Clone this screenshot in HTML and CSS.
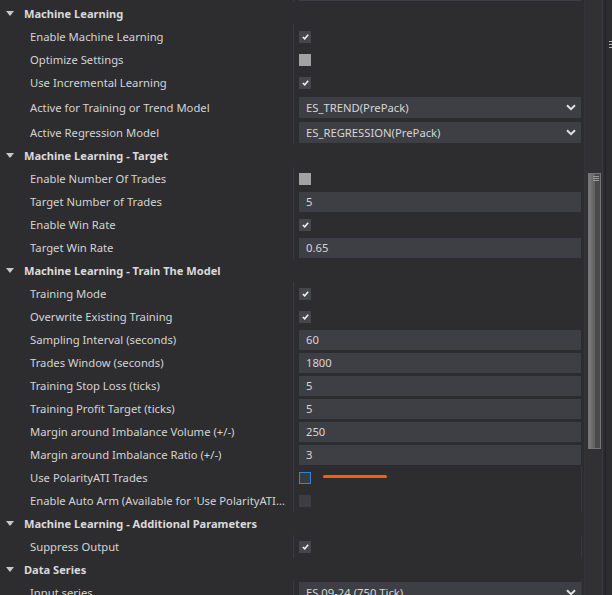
FILE: index.html
```html
<!DOCTYPE html>
<html>
<head>
<meta charset="utf-8">
<link rel="stylesheet" href="styles.css">
</head>
<body>
<div class="panel">
  <div class="row"><div class="label"></div><div class="value"><div class="box"></div></div></div>

  <div class="row header"><span class="tri"></span><span>Machine Learning</span></div>
  <div class="row"><div class="label">Enable Machine Learning</div><div class="value"><div class="cb"><svg width="7" height="6" viewBox="0 0 7 6"><path d="M0.8 3 L2.7 4.8 L6.2 0.8" fill="none" stroke="#f0f0f0" stroke-width="1.6"/></svg></div></div></div>
  <div class="row"><div class="label">Optimize Settings</div><div class="value"><div class="cb off"></div></div></div>
  <div class="row"><div class="label">Use Incremental Learning</div><div class="value"><div class="cb"><svg width="7" height="6" viewBox="0 0 7 6"><path d="M0.8 3 L2.7 4.8 L6.2 0.8" fill="none" stroke="#f0f0f0" stroke-width="1.6"/></svg></div></div></div>
  <div class="row combo1"><div class="label">Active for Training or Trend Model</div><div class="value"><div class="box combo"><span>ES_TREND(PrePack)</span><svg width="10" height="7" viewBox="0 0 10 7"><path d="M1 1.2 L5 5.2 L9 1.2" fill="none" stroke="#e0e0e0" stroke-width="2"/></svg></div></div></div>
  <div class="row combo2"><div class="label">Active Regression Model</div><div class="value"><div class="box combo"><span>ES_REGRESSION(PrePack)</span><svg width="10" height="7" viewBox="0 0 10 7"><path d="M1 1.2 L5 5.2 L9 1.2" fill="none" stroke="#e0e0e0" stroke-width="2"/></svg></div></div></div>

  <div class="row header"><span class="tri"></span><span>Machine Learning - Target</span></div>
  <div class="row"><div class="label">Enable Number Of Trades</div><div class="value"><div class="cb off"></div></div></div>
  <div class="row"><div class="label">Target Number of Trades</div><div class="value"><div class="box">5</div></div></div>
  <div class="row"><div class="label">Enable Win Rate</div><div class="value"><div class="cb"><svg width="7" height="6" viewBox="0 0 7 6"><path d="M0.8 3 L2.7 4.8 L6.2 0.8" fill="none" stroke="#f0f0f0" stroke-width="1.6"/></svg></div></div></div>
  <div class="row"><div class="label">Target Win Rate</div><div class="value"><div class="box">0.65</div></div></div>

  <div class="row header"><span class="tri"></span><span>Machine Learning - Train The Model</span></div>
  <div class="row"><div class="label">Training Mode</div><div class="value"><div class="cb"><svg width="7" height="6" viewBox="0 0 7 6"><path d="M0.8 3 L2.7 4.8 L6.2 0.8" fill="none" stroke="#f0f0f0" stroke-width="1.6"/></svg></div></div></div>
  <div class="row"><div class="label">Overwrite Existing Training</div><div class="value"><div class="cb"><svg width="7" height="6" viewBox="0 0 7 6"><path d="M0.8 3 L2.7 4.8 L6.2 0.8" fill="none" stroke="#f0f0f0" stroke-width="1.6"/></svg></div></div></div>
  <div class="row"><div class="label">Sampling Interval (seconds)</div><div class="value"><div class="box">60</div></div></div>
  <div class="row"><div class="label">Trades Window (seconds)</div><div class="value"><div class="box">1800</div></div></div>
  <div class="row"><div class="label">Training Stop Loss (ticks)</div><div class="value"><div class="box">5</div></div></div>
  <div class="row"><div class="label">Training Profit Target (ticks)</div><div class="value"><div class="box">5</div></div></div>
  <div class="row"><div class="label">Margin around Imbalance Volume (+/-)</div><div class="value"><div class="box">250</div></div></div>
  <div class="row"><div class="label">Margin around Imbalance Ratio (+/-)</div><div class="value"><div class="box">3</div></div></div>
  <div class="row"><div class="label">Use PolarityATI Trades</div><div class="value edge"><div class="cb focus"></div><div class="mark"></div></div></div>
  <div class="row"><div class="label">Enable Auto Arm (Available for 'Use PolarityATI...</div><div class="value edge"><div class="cb dis"></div></div></div>

  <div class="row header"><span class="tri"></span><span>Machine Learning - Additional Parameters</span></div>
  <div class="row"><div class="label">Suppress Output</div><div class="value edge"><div class="cb"><svg width="7" height="6" viewBox="0 0 7 6"><path d="M0.8 3 L2.7 4.8 L6.2 0.8" fill="none" stroke="#f0f0f0" stroke-width="1.6"/></svg></div></div></div>

  <div class="row header"><span class="tri"></span><span>Data Series</span></div>
  <div class="row"><div class="label">Input series</div><div class="value edge"><div class="box combo"><span>ES 09-24 (750 Tick)</span><svg width="10" height="7" viewBox="0 0 10 7"><path d="M1 1.2 L5 5.2 L9 1.2" fill="none" stroke="#e0e0e0" stroke-width="2"/></svg></div></div></div>
</div>
<div class="track">
  <div class="thumb"><div class="grip"></div><div class="grip"></div><div class="grip"></div></div>
</div>
<div class="divider"></div>
<div class="strip"><div class="glyph"></div><div class="glyph"></div><div class="glyph"></div></div>
</body>
</html>
```
FILE: styles.css
```css
html, body {
  margin: 0;
  padding: 0;
}
body {
  background: #2d2d30;
  font-family: "Noto Sans", "Open Sans", sans-serif;
  font-size: 11.25px;
  color: #d4d4d4;
  display: flex;
  height: 595px;
  overflow: hidden;
}
.panel {
  width: 584px;
  flex: none;
  margin-top: -21px;
}
.row {
  display: flex;
  align-items: center;
  height: 23px;
}
.row.combo1 { height: 26px; }
.row.combo2 { height: 24px; }
.label {
  width: 293px;
  flex: none;
  box-sizing: border-box;
  padding-left: 30px;
  white-space: nowrap;
  overflow: hidden;
}
.value {
  align-self: stretch;
  flex: 1;
  display: flex;
  align-items: center;
  border-left: 1px solid #3a3a3f;
  padding-left: 5px;
  padding-right: 3px;
}
.value.edge {
  box-shadow: inset -2px 0 0 #2d2d30, inset -3px 0 0 #37373b;
}
.box {
  flex: 1;
  height: 20px;
  background: #3e3e45;
  display: flex;
  align-items: center;
  padding-left: 7px;
  padding-right: 5px;
  color: #d6d6d6;
}
.box.combo {
  height: 21px;
  justify-content: space-between;
}
.header {
  font-weight: bold;
  font-size: 11.1px;
  color: #dadada;
}
.tri {
  width: 0;
  height: 0;
  border-left: 4.5px solid transparent;
  border-right: 4.5px solid transparent;
  border-top: 5px solid #c8c8c8;
  margin-left: 6px;
  margin-right: 10px;
}
.cb {
  width: 12px;
  height: 12px;
  background: #46464d;
  display: flex;
  align-items: center;
  justify-content: center;
}
.cb.off { background: #a2a2a2; }
.cb.dis { background: #3d3d42; }
.cb.focus {
  box-sizing: border-box;
  border: 1px solid #3a82cc;
  background: #353c46;
}
.mark {
  width: 64px;
  height: 3px;
  border-radius: 2px;
  background: #ff5a10;
  margin-left: 12px;
  margin-top: -2px;
}
.track {
  width: 18px;
  flex: none;
  background: #313134;
  border-left: 1px solid #343438;
  box-sizing: border-box;
}
.thumb {
  margin-top: 173px;
  margin-left: 3px;
  width: 13px;
  height: 276px;
  box-sizing: border-box;
  border: 1px solid #747474;
  background: linear-gradient(to right, #7a7a7a 0%, #626262 50%, #4a4a4a 55%, #4a4a4a 100%);
  padding-top: 1px;
}
.grip {
  width: 6px;
  height: 1px;
  background: #9a9a9a;
  margin: 1px 0 1px 4px;
}
.divider {
  width: 4px;
  flex: none;
  border-left: 1px solid #3a3a3e;
  border-right: 1px solid #242427;
  box-sizing: border-box;
  background: #2b2b2e;
}
.strip {
  flex: 1;
  padding-top: 41px;
}
.glyph {
  width: 4px;
  height: 1px;
  background: #b0b0b0;
  margin: 0 0 2px 3px;
}
```
